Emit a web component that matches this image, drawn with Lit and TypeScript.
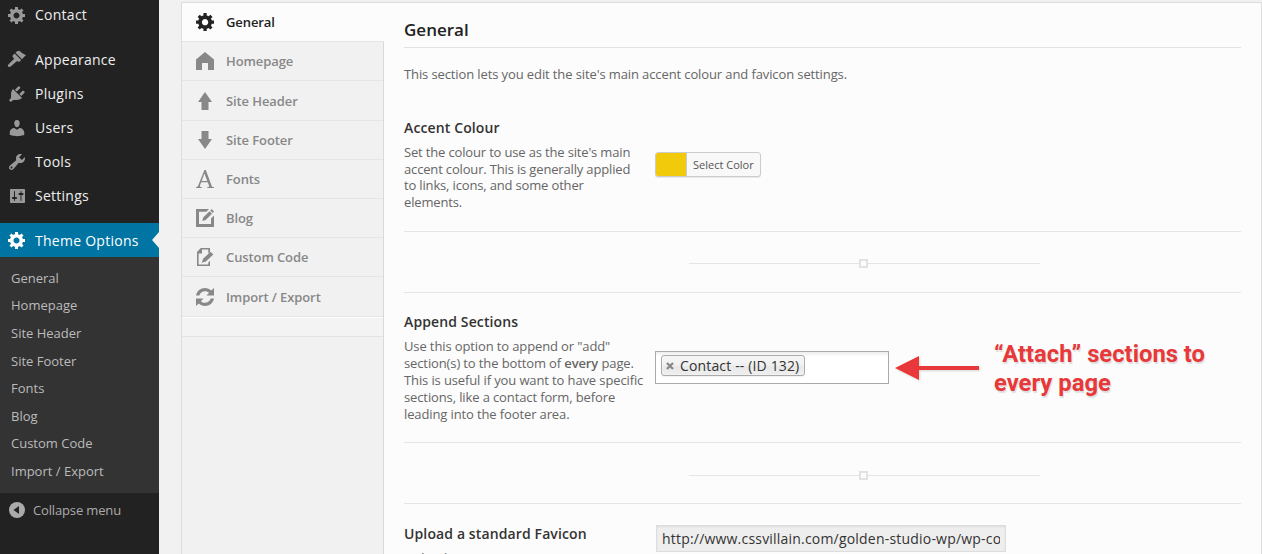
import { LitElement, html, css, svg } from "lit";
import { customElement } from "lit/decorators.js";
import { classMap } from "lit/directives/class-map.js";

const GEAR = svg`<path fill-rule="evenodd" d="M18 12h-2.18c-.17.7-.44 1.35-.81 1.93l1.54 1.54-2.1 2.1-1.54-1.54c-.58.36-1.23.63-1.91.79V19H8v-2.18c-.68-.16-1.33-.43-1.91-.79l-1.54 1.54-2.12-2.12 1.54-1.54c-.36-.58-.63-1.23-.79-1.91H1V9.03h2.17c.16-.7.44-1.35.8-1.94L2.43 5.55l2.1-2.1 1.54 1.54c.58-.37 1.24-.64 1.93-.81V2h3v2.18c.68.16 1.33.43 1.91.79l1.54-1.54 2.12 2.12-1.54 1.54c.36.59.64 1.24.8 1.94H18V12zm-8.5 1.5c1.66 0 3-1.34 3-3s-1.34-3-3-3-3 1.34-3 3 1.34 3 3 3z"/>`;

const MENU = [
  { label: "Contact", icon: GEAR, gap: true },
  {
    label: "Appearance",
    icon: svg`<path d="M10 1.2L12.2.8C14 1.8 15.6 4 19 5.2L17.5 6.6 15 9.2 8.5 2.7zM7.6 3.6l6.5 6.5-1.3 1.3c-1 .6-1.8.2-2.7-.5L4 16.2c-1 .9-2.4 1-2.9.4s-.2-1.700.7-2.500L7.200 8.700C5.900 7.400 5 6.300 5.800 5.300z"/>`,
  },
  {
    label: "Plugins",
    icon: svg`<path d="M13.11 4.36L9.87 7.6 8 5.73l3.24-3.24c.35-.34 1.05-.2 1.56.32.52.51.66 1.21.31 1.55zm-8 1.77l.91-1.12 9.01 9.01-1.19.84c-.71.71-2.63 1.16-3.82 1.16H6.14L4.9 17.26c-.59.59-1.54.59-2.12 0-.59-.58-.59-1.53 0-2.12l1.24-1.24v-3.88c0-1.13.4-3.19 1.09-3.89zm7.26 3.97l3.24-3.24c.34-.35 1.04-.21 1.55.31.52.51.66 1.21.31 1.55l-3.24 3.25z"/>`,
  },
  {
    label: "Users",
    icon: svg`<path d="M10 9.25c-2.27 0-2.73-3.44-2.73-3.44C7 4.02 7.82 2 9.97 2c2.16 0 2.98 2.02 2.71 3.81 0 0-.41 3.44-2.68 3.44zm0 2.57L12.72 10c2.39 0 4.52 2.33 4.52 4.53v2.49s-3.65 1.13-7.24 1.13c-3.65 0-7.24-1.13-7.24-1.13v-2.49c0-2.25 1.94-4.48 4.47-4.48z"/>`,
  },
  {
    label: "Tools",
    icon: svg`<path fill-rule="evenodd" d="M16.68 9.77c-1.34 1.34-3.3 1.67-4.95.99l-5.41 6.52c-.99.99-2.59.99-3.58 0s-.99-2.59 0-3.57l6.52-5.42c-.68-1.65-.35-3.61.99-4.95 1.28-1.28 3.12-1.62 4.72-1.06l-2.89 2.89 2.82 2.82 2.86-2.87c.53 1.58.18 3.39-1.08 4.65zM3.81 16.21c.4.39 1.04.39 1.43 0 .4-.4.4-1.04 0-1.43-.39-.4-1.03-.4-1.43 0-.39.39-.39 1.03 0 1.43z"/>`,
  },
  {
    label: "Settings",
    icon: svg`<path fill-rule="evenodd" d="M18 16V4c0-.55-.45-1-1-1H4c-.55 0-1 .45-1 1v12c0 .55.45 1 1 1h13c.55 0 1-.45 1-1zM8 11h1c.55 0 1 .45 1 1s-.45 1-1 1H8v1.500c0 .28-.22.5-.5.5s-.5-.22-.5-.5V13H6c-.55 0-1-.45-1-1s.45-1 1-1h1V5.500c0-.28.22-.5.5-.5s.5.22.5.5V11zm5.500-2h-1c-.55 0-1-.45-1-1s.45-1 1-1h1V5.500c0-.28.22-.5.5-.5s.5.22.5.5V7h1c.55 0 1 .45 1 1s-.45 1-1 1h-1v5.500c0 .28-.22.5-.5.5s-.5-.22-.5-.5V9z"/>`,
    gap: true,
  },
  { label: "Theme Options", icon: GEAR, current: true },
];

const SECTIONS = [
  { label: "General", icon: svg`<g transform="translate(-1 -2) scale(1.06)">${GEAR}</g>` },
  { label: "Homepage", icon: svg`<path d="M9 0L0 7.500V18h6v-7h6v7h6V7.500z"/>` },
  { label: "Site Header", icon: svg`<path d="M9 0l7 10h-3.500v8h-7v-8H2z"/>` },
  { label: "Site Footer", icon: svg`<path d="M9 18l7-10h-3.500V0h-7v8H2z"/>` },
  {
    label: "Fonts",
    icon: svg`<path d="M8.400 0h1.400l6 16.200c.2.600.7.800 2.200.9v.9h-6.700v-.9c1.700-.1 2.100-.3 1.700-1.500L11.700 12.200H5.200l-1.200 3.200c-.4 1.200.1 1.600 1.800 1.700v.9H0v-.9c1.200-.1 1.700-.5 2.200-1.700zM8.400 3.600L5.700 10.900h5.500z" fill-rule="evenodd"/>`,
  },
  {
    label: "Blog",
    icon: svg`<path d="M0 0h13l-2.700 2.800H3v12.200h12V9.500l3-3V18H0z"/><path d="M6.200 12l1-3.500 6.300-6.300 2.500 2.500L9.700 11zM14.300 1.400L15.700 0 18 2.500 16.700 3.900z"/>`,
  },
  {
    label: "Custom Code",
    icon: svg`<path d="M4.800 0H14v4l-1.700 1.600V1.500H6v4H2.600v11h9.700V14.500L14 12.800V18H1V4z"/><path d="M5.800 14.800l1.300-4 7.400-7L17.300 6.500 9.900 13.600z"/>`,
  },
  {
    label: "Import / Export",
    icon: svg`<path d="M0 7.500C.8 3 4.500 0 9 0c2.500 0 4.600.9 6.200 2.500L18 0v7.500h-7.500l2.600-2.700C12 3.700 10.600 3.200 9 3.200c-2.700 0-5 1.700-5.700 4.300zM18 10.500c-.8 4.500-4.500 7.500-9 7.500-2.500 0-4.600-.9-6.200-2.500L0 18v-7.500h7.500l-2.600 2.700c1.100 1.100 2.500 1.600 4.100 1.600 2.700 0 5-1.700 5.700-4.300z"/>`,
  },
];

@customElement("admin-menu")
class AdminMenu extends LitElement {
  static styles = css`
    :host { display: block; width: 159px; height: 556px; margin-top: -2px; background: #222; color: #eee; flex: none; }
    .item { display: flex; align-items: center; height: 34px; padding-left: 7px; gap: 8px; font-size: 14px; line-height: 18px; letter-spacing: 0.26px; }
    .item svg { width: 20px; height: 20px; fill: #999; flex: none; }
    .gap { margin-bottom: 11px; }
    .gap.late { margin-bottom: 10px; }
    .current { background: #0074a2; color: #fff; }
    .current span { padding-top: 2px; }
    .current svg { fill: #fff; }
    .notch { margin-left: auto; border: 8px solid transparent; border-left: 0; border-right: 7px solid #f1f1f1; }
    .sub { background: #333; height: 229.1px; padding-top: 6.9px; font-size: 13px; color: #bbb; }
    .sub div { height: 27.56px; line-height: 28px; padding-left: 11px; white-space: nowrap; }
    .collapse { display: flex; align-items: center; height: 34px; padding-left: 9px; gap: 8px; font-size: 13px; letter-spacing: -0.15px; color: #aaa; }
    .collapse svg { width: 16px; height: 16px; }
  `;
  render() {
    return html`
      ${MENU.map(
        (m, i) => html`<div class=${classMap({ item: true, gap: !!m.gap, late: i > 0, current: !!m.current })}>
          <svg viewBox="0 0 20 20">${m.icon}</svg><span>${m.label}</span>
          ${m.current ? html`<i class="notch"></i>` : ""}
        </div>`
      )}
      <div class="sub">${SECTIONS.map((s) => html`<div>${s.label}</div>`)}</div>
      <div class="collapse">
        <svg viewBox="0 0 16 16"><circle cx="8" cy="8" r="8" fill="#aaa" /><path d="M10 4v8L4.500 8z" fill="#222" /></svg>
        <span>Collapse menu</span>
      </div>`;
  }
}

@customElement("section-tabs")
class SectionTabs extends LitElement {
  static styles = css`
    :host { display: block; width: 202px; flex: none; background: #f1f1f1; font-size: 13px; font-weight: 600; letter-spacing: -0.1px; color: #888; box-shadow: inset -1px 0 #d9d9d9; }
    .tab { display: flex; align-items: center; box-sizing: border-box; height: 39.2px; padding: 0.25px 0 0 14px; gap: 12px; border-bottom: 1px solid #e5e5e5; margin-right: 1px; line-height: 18px; }
    .tab svg { width: 18px; height: 18px; fill: #888; }
    .active { background: #fcfcfc; color: #222; margin-right: 0; }
    .active svg { fill: #222; }
    .end { height: 18px; border-top: 1px solid #fff; border-bottom: 1px solid #e3e3e3; margin-right: 1px; background: #f3f3f3; }
  `;
  render() {
    return html`${SECTIONS.map(
        (s, i) => html`<div class=${classMap({ tab: true, active: i === 0 })}>
          <svg viewBox="0 0 18 18">${s.icon}</svg><span>${s.label}</span>
        </div>`
      )}
      <div class="end"></div>`;
  }
}

@customElement("app-root")
class AppRoot extends LitElement {
  static styles = css`
    :host { display: flex; height: 554px; overflow: hidden; background: #f1f1f1; font-family: "Open Sans", sans-serif; }
    .panel { display: flex; flex: 1; box-sizing: border-box; margin: 2px 0 -2px 22px; border: 1px solid #ddd; }
    .content { flex: 1; background: #fcfcfc; padding: 0 20px; color: #666; font-size: 13px; line-height: 16.6px; white-space: nowrap; }
    h2 { margin: 0; height: 44px; border-bottom: 1px solid #e2e2e2; font-size: 17px; line-height: 54px; font-weight: 600; color: #222; }
    .intro { margin: 0; height: 70px; line-height: 53px; letter-spacing: -0.11px; }
    h3 { margin: 0; height: 26px; font-size: 14px; line-height: 20px; font-weight: 600; color: #333; letter-spacing: 0.12px; }
    p { margin: 0; letter-spacing: -0.12px; }
    strong { font-weight: 600; }
    .row { display: flex; border-bottom: 1px solid #e5e5e5; }
    .label { width: 251px; flex: none; }
    .accent { height: 113px; }
    .accent p { letter-spacing: -0.16px; }
    .append { height: 130px; padding-top: 19px; }
    .append p { margin-top: -0.5px; line-height: 17px; }
    .favicon { height: 52px; padding-top: 20px; border: 0; }
    .divider { display: flex; align-items: center; height: 60px; border-bottom: 1px solid #e5e5e5; padding-left: 285px; }
    .divider i { width: 170px; height: 1px; background: #e5e5e5; margin-top: 3px; }
    .divider i:last-child { width: 172px; }
    .divider b { width: 5px; height: 5px; border: 2px solid #e2e2e2; margin-top: 3px; }
    .divider.low i, .divider.low b { margin-top: 5px; }
    .picker { display: flex; box-sizing: border-box; width: 106px; height: 25px; margin-top: 34px; border: 1px solid #ccc; border-radius: 3px; background: #f8f8f8; overflow: hidden; box-shadow: 0 1px 0 rgba(0,0,0,0.08); font-size: 11px; line-height: 24px; color: #555; }
    .swatch { width: 30px; background: #f2ca0c; border-right: 1px solid #ccc; margin-right: 6px; }
    .chosen { box-sizing: border-box; width: 234px; height: 33px; margin-top: 39px; border: 1px solid #aaa; background: linear-gradient(#eee 1%, #fff 15%); padding: 3px 5px; }
    .chip { display: flex; align-items: center; gap: 6px; box-sizing: border-box; width: 144px; height: 21px; padding: 0 4px; border: 1px solid #aaa; border-radius: 3px; background: linear-gradient(#f4f4f4 20%, #f0f0f0 50%, #e8e8e8 52%, #eee); font-size: 14px; letter-spacing: 0.15px; color: #333; box-shadow: 0 0 2px #fff inset, 0 1px 0 rgba(0,0,0,0.05); }
    .chip svg { width: 8px; height: 8px; margin-top: 1px; flex: none; }
    .chip span { padding-top: 2px; }
    .note { display: flex; align-items: flex-start; }
    .arrow { width: 86px; height: 26px; margin: 43px 13px 0 6px; filter: drop-shadow(1px 1px 1px rgba(0,0,0,0.15)); }
    .callout { margin-top: 28px; font: 700 23.8px/29px Roboto, sans-serif; color: #e83839; text-shadow: 1px 2px 1px rgba(0,0,0,0.12); }
    .url { box-sizing: border-box; width: 350px; height: 27px; margin: 1px 0 0 1px; border: 1px solid #ddd; box-shadow: inset 0 1px 2px rgba(0,0,0,0.07); background: #eee; padding: 0 5px; font-size: 14px; line-height: 26px; letter-spacing: 0.2px; color: #333; }
    .clip { overflow: hidden; }
  `;
  divider(low = false) {
    return html`<div class=${classMap({ divider: true, low })}><i></i><b></b><i></i></div>`;
  }
  render() {
    return html`
      <admin-menu></admin-menu>
      <div class="panel">
        <section-tabs></section-tabs>
        <div class="content">
          <h2>General</h2>
          <p class="intro">This section lets you edit the site's main accent colour and favicon settings.</p>
          <div class="row accent">
            <div class="label">
              <h3>Accent Colour</h3>
              <p>Set the colour to use as the site's main<br />accent colour. This is generally applied<br />to links, icons, and some other<br />elements.</p>
            </div>
            <div class="picker"><span class="swatch"></span>Select Color</div>
          </div>
          ${this.divider()}
          <div class="row append">
            <div class="label">
              <h3>Append Sections</h3>
              <p>Use this option to append or "add"<br />section(s) to the bottom of <strong>every</strong> page.<br />This is useful if you want to have specific<br />sections, like a contact form, before<br />leading into the footer area.</p>
            </div>
            <div>
              <div class="chosen"><div class="chip">
                <svg viewBox="0 0 8 8"><path d="M1 1l6 6M7 1L1 7" stroke="#888" stroke-width="2.300" /></svg>
                <span>Contact -- (ID 132)</span>
              </div></div>
            </div>
            <div class="note">
              <svg class="arrow" viewBox="0 0 86 26"><path d="M0 13L24 1v10h60v4H24v10z" fill="#e83839" /></svg>
              <div class="callout">“Attach” sections to<br />every page</div>
            </div>
          </div>
          ${this.divider(true)}
          <div class="row favicon">
            <div class="label">
              <h3>Upload a standard Favicon</h3>
              <p>Upload a 16px x 16px</p>
            </div>
            <div class="url"><div class="clip">http://www.cssvillain.com/golden-studio-wp/wp-co</div></div>
          </div>
        </div>
      </div>`;
  }
}
